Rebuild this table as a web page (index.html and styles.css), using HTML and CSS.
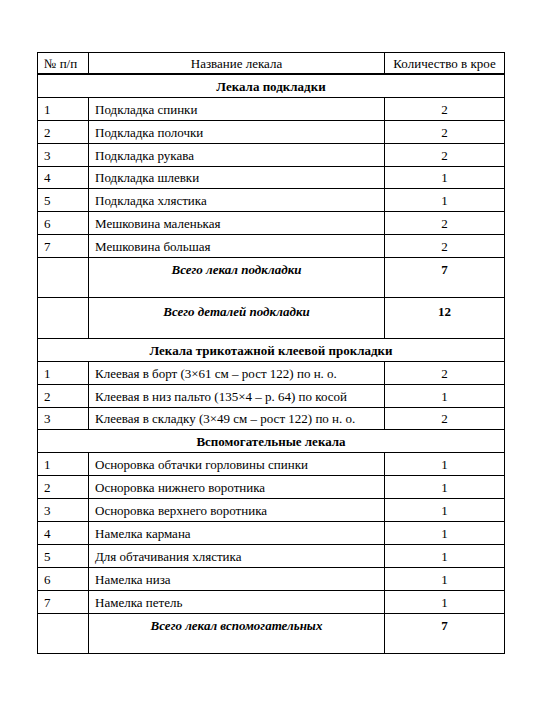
FILE: index.html
```html
<!DOCTYPE html>
<html lang="ru">
<head>
<meta charset="utf-8">
<title>Лекала</title>
<link rel="stylesheet" href="styles.css">
</head>
<body>
<table class="spec">
  <colgroup>
    <col class="c-num">
    <col class="c-name">
    <col class="c-qty">
  </colgroup>
  <thead>
    <tr class="head">
      <th class="num">№ п/п</th>
      <th class="name-h">Название лекала</th>
      <th class="qty-h">Количество в крое</th>
    </tr>
  </thead>
  <tbody>
    <tr class="section"><td colspan="3">Лекала подкладки</td></tr>
    <tr><td class="num">1</td><td class="name">Подкладка спинки</td><td class="qty">2</td></tr>
    <tr><td class="num">2</td><td class="name">Подкладка полочки</td><td class="qty">2</td></tr>
    <tr><td class="num">3</td><td class="name">Подкладка рукава</td><td class="qty">2</td></tr>
    <tr class="short"><td class="num">4</td><td class="name">Подкладка шлевки</td><td class="qty">1</td></tr>
    <tr><td class="num">5</td><td class="name">Подкладка хлястика</td><td class="qty">1</td></tr>
    <tr><td class="num">6</td><td class="name">Мешковина маленькая</td><td class="qty">2</td></tr>
    <tr><td class="num">7</td><td class="name">Мешковина большая</td><td class="qty">2</td></tr>
    <tr class="total"><td class="num"></td><td class="total-label">Всего лекал подкладки</td><td class="total-qty">7</td></tr>
    <tr class="total t2"><td class="num"></td><td class="total-label">Всего деталей подкладки</td><td class="total-qty">12</td></tr>
    <tr class="section"><td colspan="3">Лекала трикотажной клеевой прокладки</td></tr>
    <tr><td class="num">1</td><td class="name">Клеевая в борт (3×61 см – рост 122) по н. о.</td><td class="qty">2</td></tr>
    <tr><td class="num">2</td><td class="name">Клеевая в низ пальто (135×4 – р. 64) по косой</td><td class="qty">1</td></tr>
    <tr class="short"><td class="num">3</td><td class="name">Клеевая в складку (3×49 см – рост 122) по н. о.</td><td class="qty">2</td></tr>
    <tr class="section"><td colspan="3">Вспомогательные лекала</td></tr>
    <tr><td class="num">1</td><td class="name">Осноровка обтачки горловины спинки</td><td class="qty">1</td></tr>
    <tr><td class="num">2</td><td class="name">Осноровка нижнего воротника</td><td class="qty">1</td></tr>
    <tr><td class="num">3</td><td class="name">Осноровка верхнего воротника</td><td class="qty">1</td></tr>
    <tr><td class="num">4</td><td class="name">Намелка кармана</td><td class="qty">1</td></tr>
    <tr><td class="num">5</td><td class="name">Для обтачивания хлястика</td><td class="qty">1</td></tr>
    <tr><td class="num">6</td><td class="name">Намелка низа</td><td class="qty">1</td></tr>
    <tr><td class="num">7</td><td class="name">Намелка петель</td><td class="qty">1</td></tr>
    <tr class="total"><td class="num"></td><td class="total-label">Всего лекал вспомогательных</td><td class="total-qty">7</td></tr>
  </tbody>
</table>
</body>
</html>
```

FILE: styles.css
```css
html, body {
  margin: 0;
  padding: 0;
  background: #ffffff;
}

body {
  padding: 52px 0 0 37px;
  font-family: "Liberation Serif", "DejaVu Serif", serif;
  font-size: 13px;
  color: #000000;
}

.spec {
  border-collapse: collapse;
  width: 467px;
  table-layout: fixed;
  font-family: "Liberation Serif", "DejaVu Serif", serif;
}

.c-num { width: 51px; }
.c-name { width: 296px; }
.c-qty { width: 120px; }

.spec th,
.spec td {
  border: 1px solid #000000;
  padding: 0 6px;
  height: 22px;
  line-height: 15px;
  font-family: "Liberation Serif", "DejaVu Serif", serif;
  font-weight: normal;
  vertical-align: middle;
  white-space: nowrap;
  overflow: hidden;
}

.spec tr.short td {
  height: 21px;
}

.head th {
  border-bottom: 2px solid #000000;
  height: 20px;
}

.head .num { text-align: left; }
.head .name-h { text-align: center; }
.head .qty-h { text-align: center; padding: 0 2px; }

.num { text-align: left; }
.name { text-align: left; }
.qty { text-align: center; }

.spec .section td {
  text-align: center;
  font-weight: bold;
}

.spec .total td {
  height: 35px;
  vertical-align: top;
  padding-top: 4px;
  padding-bottom: 0;
}

.spec .total.t2 td {
  height: 34px;
  padding-top: 6px;
}

.spec .total-label {
  text-align: center;
  font-weight: bold;
  font-style: italic;
}

.spec .total-qty {
  text-align: center;
  font-weight: bold;
}
```
